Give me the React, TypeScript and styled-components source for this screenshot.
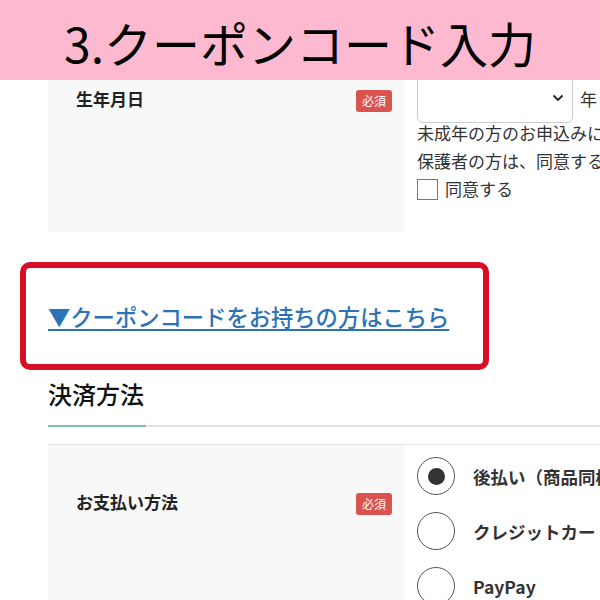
import React from 'react';
import styled, { createGlobalStyle } from 'styled-components';

const GlobalStyle = createGlobalStyle`
  html, body {
    margin: 0;
    padding: 0;
    background: #fff;
    overflow: hidden;
  }
  body {
    font-family: "Noto Sans CJK JP", "Noto Sans", sans-serif;
    color: #333;
  }
`;

const Banner = styled.header`
  height: 80px;
  background: #fdb9cf;
  color: #000;
  font-size: 48px;
  font-weight: 400;
  line-height: 84px;
  padding-left: 64px;
  white-space: nowrap;
`;

const Page = styled.main`
  width: 760px;
  padding-left: 48px;
`;

const FormRow = styled.div<{ $height?: number; $bordered?: boolean }>`
  display: grid;
  grid-template-columns: 356px 1fr;
  height: ${p => (p.$height ? `${p.$height}px` : 'auto')};
  overflow: hidden;
  border-top: ${p => (p.$bordered ? '1px solid #e6e6e6' : 'none')};
`;

const LabelCell = styled.div<{ $top: number }>`
  background: #f8f8f8;
  display: flex;
  justify-content: space-between;
  align-items: flex-start;
  padding: ${p => p.$top}px 12px 0 28px;
`;

const Label = styled.span`
  font-size: 17px;
  font-weight: 700;
  line-height: 22px;
  color: #222;
`;

const Required = styled.span`
  margin-top: 2px;
  height: 22px;
  padding: 0 6px;
  border-radius: 3px;
  background: #d9534f;
  color: #fff;
  font-size: 12px;
  line-height: 22px;
`;

const ValueCell = styled.div`
  padding-left: 13px;
`;

const SelectLine = styled.div`
  display: flex;
  align-items: center;
  margin-top: -7px;
`;

const SelectBox = styled.div`
  width: 156px;
  height: 50px;
  box-sizing: border-box;
  border: 1px solid #ccc;
  border-radius: 6px;
  background: #fff;
  display: flex;
  align-items: center;
  justify-content: flex-end;
  padding-right: 8px;
`;

const Unit = styled.span`
  margin-left: 7px;
  font-size: 17px;
`;

const Note = styled.p`
  margin: -4px 0 0;
  font-size: 17px;
  line-height: 28px;
  white-space: nowrap;
`;

const CheckLine = styled.label`
  display: flex;
  align-items: center;
  gap: 7px;
  font-size: 17px;
  line-height: 28px;
`;

const CheckBox = styled.span`
  width: 21px;
  height: 21px;
  box-sizing: border-box;
  border: 1px solid #777;
  background: #fff;
`;

const CouponBox = styled.div`
  margin: 30px 0 0 -28px;
  width: 469px;
  height: 108px;
  box-sizing: border-box;
  border: 6px solid #d60f27;
  border-radius: 10px;
  display: flex;
  align-items: center;
  padding-left: 22px;
`;

const CouponLink = styled.a`
  color: #2b73b6;
  font-size: 22.3px;
  font-weight: 500;
  line-height: 30px;
  text-decoration: underline;
  text-decoration-thickness: 2px;
  text-underline-offset: 3px;
  white-space: nowrap;
  cursor: pointer;
`;

const SectionTitle = styled.h2`
  margin: 6px 0 0;
  padding-bottom: 13px;
  font-size: 24px;
  font-weight: 500;
  line-height: 36px;
  color: #111;
`;

const TitleRule = styled.div`
  height: 2px;
  background: #e2e2e2;
  &::before {
    content: '';
    display: block;
    width: 98px;
    height: 2px;
    background: #80bfa6;
  }
`;

const PaymentRow = styled(FormRow)`
  margin-top: 17px;
  height: 200px;
`;

const Options = styled.div`
  display: flex;
  flex-direction: column;
  gap: 17px;
  padding: 12px 0 0 13px;
`;

const Option = styled.label`
  display: flex;
  align-items: center;
  gap: 18px;
  font-size: 17.5px;
  font-weight: 700;
  color: #333;
  white-space: nowrap;
`;

const Radio = styled.span<{ $checked?: boolean }>`
  width: 38px;
  height: 38px;
  box-sizing: border-box;
  border: 1px solid #555;
  border-radius: 50%;
  background: #fff;
  display: flex;
  align-items: center;
  justify-content: center;
  flex-shrink: 0;
  &::after {
    content: '';
    width: 17px;
    height: 17px;
    border-radius: 50%;
    background: #333;
    display: ${p => (p.$checked ? 'block' : 'none')};
  }
`;

const Chevron = () => (
  <svg width="12" height="8" viewBox="0 0 12 8">
    <path d="M1.5 1.5 L6 6 L10.5 1.5" fill="none" stroke="#222" strokeWidth="1.8" />
  </svg>
);

const payments = [
  { label: '後払い（商品同梱）コンビニ・郵便局・銀行', checked: true },
  { label: 'クレジットカード', checked: false },
  { label: 'PayPay', checked: false },
];

const App = () => (
  <>
    <GlobalStyle />
    <Banner>3.クーポンコード入力</Banner>
    <Page>
      <FormRow $height={152}>
        <LabelCell $top={8}>
          <Label>生年月日</Label>
          <Required>必須</Required>
        </LabelCell>
        <ValueCell>
          <SelectLine>
            <SelectBox>
              <Chevron />
            </SelectBox>
            <Unit>年</Unit>
          </SelectLine>
          <Note>
            未成年の方のお申込みには保護者の同意が必要です。
            <br />
            保護者の方は、同意するにチェックしてください。
          </Note>
          <CheckLine>
            <CheckBox />
            同意する
          </CheckLine>
        </ValueCell>
      </FormRow>

      <CouponBox>
        <CouponLink>▼クーポンコードをお持ちの方はこちら</CouponLink>
      </CouponBox>

      <SectionTitle>決済方法</SectionTitle>
      <TitleRule />

      <PaymentRow $bordered>
        <LabelCell $top={46}>
          <Label>お支払い方法</Label>
          <Required>必須</Required>
        </LabelCell>
        <Options>
          {payments.map(p => (
            <Option key={p.label}>
              <Radio $checked={p.checked} />
              {p.label}
            </Option>
          ))}
        </Options>
      </PaymentRow>
    </Page>
  </>
);

export default App;
